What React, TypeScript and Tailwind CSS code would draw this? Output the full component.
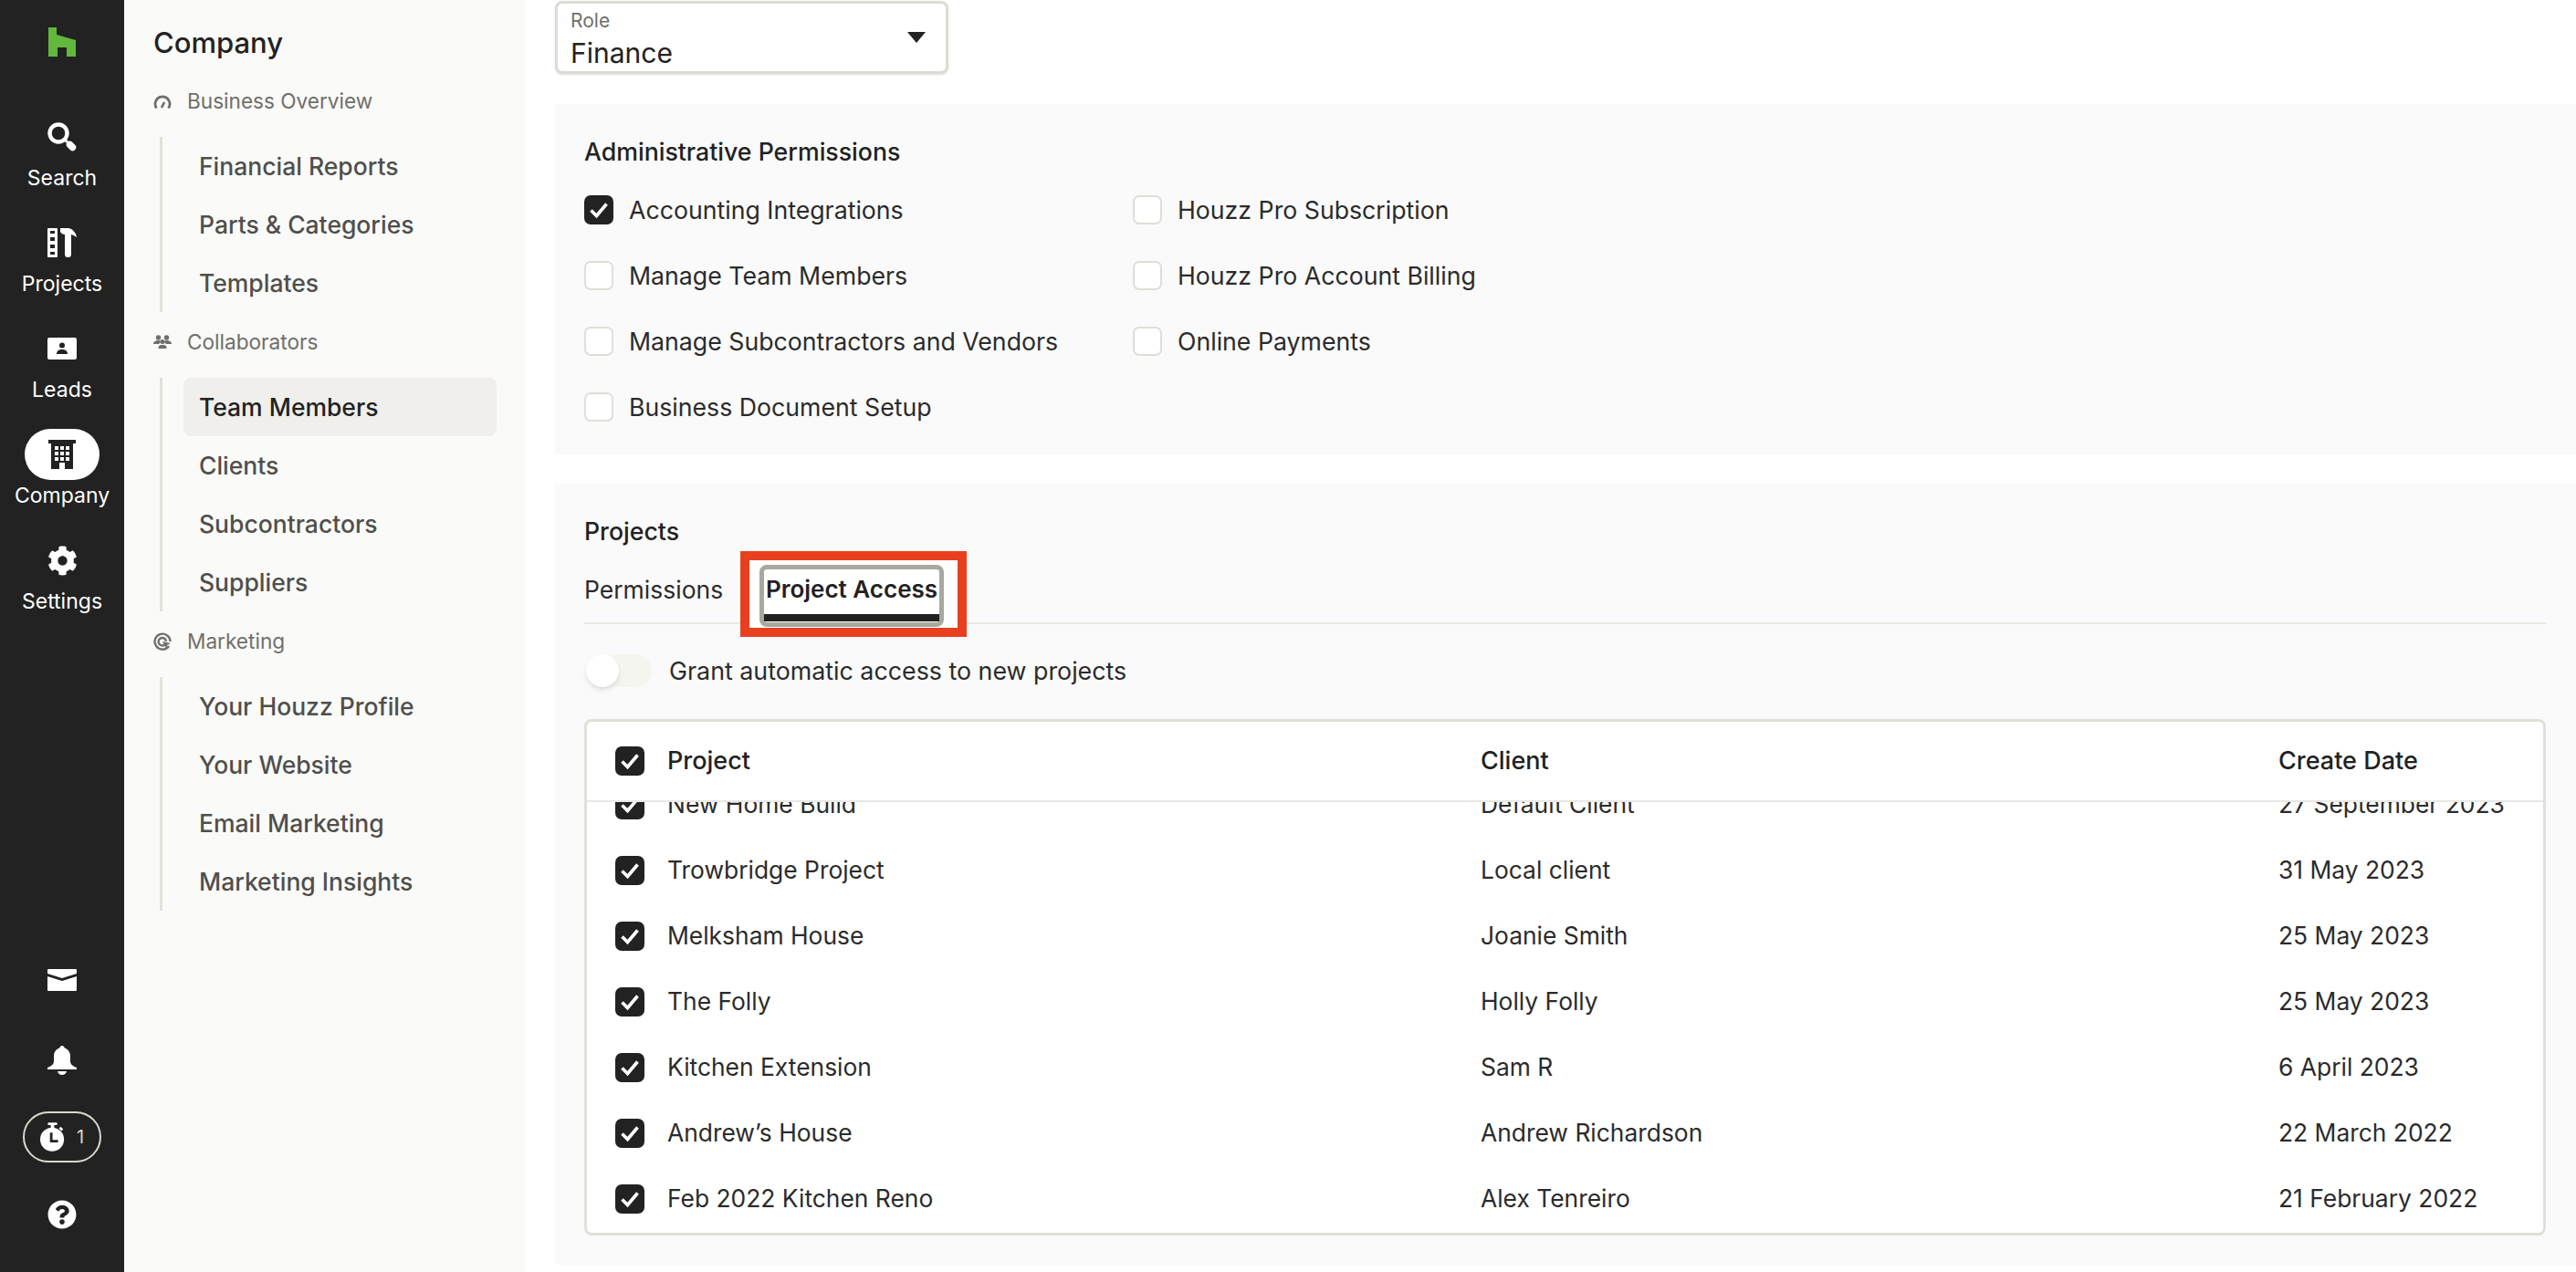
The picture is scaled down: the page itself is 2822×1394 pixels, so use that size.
import { FaCog, FaQuestionCircle } from "react-icons/fa";
import type { ReactNode } from "react";

const font = { fontFamily: "Inter, 'Noto Sans', sans-serif" };

function HouzzLogo() {
  return (
    <svg width="30" height="32" viewBox="0 0 30 32" fill="#62b83c">
      <path d="M0 0H9V8L30 14V32H20V22H10V32H0Z" />
    </svg>
  );
}

function SearchIcon() {
  return (
    <svg width="32" height="32" viewBox="0 0 32 32" fill="none" stroke="#fff">
      <circle cx="12" cy="12" r="9.5" strokeWidth="4.4" />
      <path d="M19 19L22 22" strokeWidth="3" />
      <path d="M24.5 24.5L27.5 27.5" strokeWidth="7.5" strokeLinecap="round" />
    </svg>
  );
}

function ProjectsIcon() {
  return (
    <svg width="32" height="32" viewBox="0 0 32 32" fill="#fff">
      <rect width="11" height="32" rx="1" />
      <path fill="#222" d="M3 3H8V6H3ZM3 10H8V14H3ZM3 18H8V22H3ZM3 26H8V29H3Z" />
      <path d="M14 0H23C28 1 31 5 32 10C29 8 27 7 26 7V28.5a3.5 3.5 0 0 1-7 0V7C17 7 15 6 14 4Z" />
    </svg>
  );
}

function LeadsIcon() {
  return (
    <svg width="32" height="24" viewBox="0 0 32 24" fill="#fff">
      <rect width="32" height="24" rx="2" />
      <circle cx="16" cy="8.5" r="3" fill="#222" />
      <path d="M10 18C10 14 13 13 16 13S22 14 22 18Z" fill="#222" />
    </svg>
  );
}

function BuildingIcon() {
  return (
    <svg width="30" height="32" viewBox="0 0 30 32" fill="#222">
      <path d="M0 0H30V4H27V32H18V25H12V32H3V4H0Z" />
      <path
        fill="#fff"
        d="M7 7H11V11H7ZM13 7H17V11H13ZM19 7H23V11H19ZM7 13H11V17H7ZM13 13H17V17H13ZM19 13H23V17H19ZM7 19H11V23H7ZM13 19H17V23H13ZM19 19H23V23H19Z"
      />
    </svg>
  );
}

function MailIcon() {
  return (
    <svg width="32" height="24" viewBox="0 0 32 24" fill="#fff">
      <path d="M1 0H31a1 1 0 0 1 1 1V5L16 10L0 5V1a1 1 0 0 1 1-1Z" />
      <path d="M0 8L16 13L32 8V23a1 1 0 0 1-1 1H1a1 1 0 0 1-1-1Z" />
    </svg>
  );
}

function BellIcon() {
  return (
    <svg width="32" height="32" viewBox="0 0 32 32" fill="#fff">
      <path d="M16 0C17.5 0 18.5 1 18.7 2.5C22.5 3.8 25 7 25 11V17C25 20 27 22 32 24V26H0V24C5 22 7 20 7 17V11C7 7 9.5 3.8 13.3 2.5C13.5 1 14.5 0 16 0Z" />
      <path d="M11 28H21C20.4 30.5 18.4 32 16 32S11.6 30.5 11 28Z" />
    </svg>
  );
}

function TimerIcon() {
  return (
    <svg width="28" height="32" viewBox="0 0 30 34" fill="#fff">
      <rect x="9" y="0" width="11" height="3" rx="1" />
      <rect x="12.5" y="2" width="4" height="5" />
      <path d="M24 5L27 8L25 10L22 7Z" />
      <circle cx="14" cy="20" r="14" />
      <path d="M13 12V22H21" fill="none" stroke="#222" strokeWidth="3" />
    </svg>
  );
}

function GaugeIcon() {
  return (
    <svg width="20" height="16" viewBox="0 0 20 16" fill="none" stroke="#6f6f6b" strokeWidth="2.8">
      <path d="M3.5 15.5A8 8 0 1 1 16.5 15.5" />
      <path d="M9 15L12 9" strokeWidth="2.6" />
    </svg>
  );
}

function PeopleIcon() {
  return (
    <svg width="20" height="16" viewBox="0 0 20 16" fill="#6f6f6b">
      <circle cx="5.5" cy="3" r="2.7" />
      <circle cx="14.5" cy="3" r="2.7" />
      <path d="M0 10C0 7 3 6 5.5 6S8 7 8 8L6 10Z" />
      <path d="M20 10C20 7 17 6 14.5 6S12 7 12 8L14 10Z" />
      <circle cx="10" cy="7.5" r="2.5" />
      <path d="M5.5 14C5.5 11.5 8 11 10 11S14.5 11.5 14.5 14V15H5.5Z" />
    </svg>
  );
}

function MarketingIcon() {
  return (
    <svg width="20" height="20" viewBox="0 0 20 20" fill="none" stroke="#6f6f6b" strokeWidth="2.4">
      <path d="M17 15A8.5 8.5 0 1 1 18.5 10" />
      <path d="M12.5 13.5A4.2 4.2 0 1 1 14 10" />
      <path d="M10 10L19 12L15 14L14 18Z" fill="#6f6f6b" stroke="none" />
    </svg>
  );
}

function RailItem({ icon, label, active }: { icon: ReactNode; label: string; active?: boolean }) {
  return (
    <div className="flex h-[116px] flex-col items-center">
      <div className={`flex h-[56px] w-[82px] items-center justify-center rounded-full ${active ? "bg-white" : ""}`}>
        {icon}
      </div>
      <span className="text-[23px] leading-[34px] text-white">{label}</span>
    </div>
  );
}

function Rail() {
  return (
    <div className="flex h-full w-[136px] shrink-0 flex-col items-center bg-[#222222]">
      <div className="flex h-[122px] w-full justify-center pt-[30px]">
        <HouzzLogo />
      </div>
      <RailItem icon={<SearchIcon />} label="Search" />
      <RailItem icon={<ProjectsIcon />} label="Projects" />
      <RailItem icon={<LeadsIcon />} label="Leads" />
      <RailItem icon={<BuildingIcon />} label="Company" active />
      <RailItem icon={<FaCog size={33} color="#fff" />} label="Settings" />
      <div className="mt-auto flex flex-col items-center pb-[47px]">
        <MailIcon />
        <div className="mt-[60px]">
          <BellIcon />
        </div>
        <div className="mt-[40px] flex h-[56px] w-[86px] items-center justify-center gap-[12px] rounded-full border-[2px] border-[#d8d8ce]">
          <TimerIcon />
          <span className="text-[20px] text-[#d8d8ce]">1</span>
        </div>
        <div className="mt-[41px]">
          <FaQuestionCircle size={32} color="#fff" />
        </div>
      </div>
    </div>
  );
}

function SideGroup({ icon, title, items, current }: { icon: ReactNode; title: string; items: string[]; current?: string }) {
  return (
    <div>
      <div className="flex h-[72px] items-start pt-[19px] text-[22.6px] leading-[28px] text-[#6f6f6b]">
        <span className="flex h-[28px] w-[37px] items-center">{icon}</span>
        {title}
      </div>
      <div className="ml-[7px] flex flex-col border-l-[3px] border-[#e2e2da] pl-[23px] pr-[32px]">
        {items.map((item) => (
          <div
            key={item}
            className={`flex h-[64px] items-center rounded-[8px] pl-[17px] pt-[2px] text-[26.5px] font-medium ${
              item === current ? "bg-[#f0efeb] text-[#222222]" : "text-[#4f4f4c]"
            }`}
          >
            {item}
          </div>
        ))}
      </div>
    </div>
  );
}

function Sidebar() {
  return (
    <div className="h-full w-[440px] shrink-0 bg-[#fafaf8] pl-[32px]">
      <div className="flex h-[78px] items-start pt-[27px] text-[31px] font-medium leading-[40px] text-[#222222]">Company</div>
      <SideGroup
        icon={<GaugeIcon />}
        title="Business Overview"
        items={["Financial Reports", "Parts & Categories", "Templates"]}
      />
      <SideGroup
        icon={<PeopleIcon />}
        title="Collaborators"
        items={["Team Members", "Clients", "Subcontractors", "Suppliers"]}
        current="Team Members"
      />
      <SideGroup
        icon={<MarketingIcon />}
        title="Marketing"
        items={["Your Houzz Profile", "Your Website", "Email Marketing", "Marketing Insights"]}
      />
    </div>
  );
}

function CheckBox({ checked }: { checked?: boolean }) {
  if (checked) {
    return (
      <span className="flex h-[32px] w-[32px] shrink-0 items-center justify-center rounded-[7px] bg-[#222222]">
        <svg width="32" height="32" viewBox="0 0 32 32" fill="none" stroke="#fff" strokeWidth="3.6">
          <path d="M7.5 16.5L13.5 22.5L24.5 9.5" />
        </svg>
      </span>
    );
  }
  return <span className="h-[32px] w-[32px] shrink-0 rounded-[7px] border-[2px] border-[#dfdfd8] bg-white" />;
}

function Permission({ label, checked }: { label: string; checked?: boolean }) {
  return (
    <div className="flex h-[72px] items-center gap-[17px] text-[26.7px] text-[#2b2b2b]">
      <CheckBox checked={checked} />
      {label}
    </div>
  );
}

const rows = [
  ["New Home Build", "Default Client", "27 September 2023"],
  ["Trowbridge Project", "Local client", "31 May 2023"],
  ["Melksham House", "Joanie Smith", "25 May 2023"],
  ["The Folly", "Holly Folly", "25 May 2023"],
  ["Kitchen Extension", "Sam R", "6 April 2023"],
  ["Andrew’s House", "Andrew Richardson", "22 March 2022"],
  ["Feb 2022 Kitchen Reno", "Alex Tenreiro", "21 February 2022"],
];

function ProjectTable() {
  return (
    <div className="overflow-hidden rounded-[8px] border-[3px] border-[#e0e0d8] bg-white">
      <div className="grid h-[88px] grid-cols-[979px_874px_1fr] items-center border-b-[2px] border-[#e8e8e4] text-[27px] font-medium text-[#222222]">
        <div className="flex items-center gap-[25px] pl-[31px]">
          <CheckBox checked />
          Project
        </div>
        <div>Client</div>
        <div>Create Date</div>
      </div>
      <div className="h-[472px] overflow-hidden">
        <div className="-mt-[33px]">
          {rows.map((row) => (
            <div key={row[0]} className="grid h-[72px] grid-cols-[979px_874px_1fr] items-center text-[26.4px] text-[#2b2b2b]">
              <div className="flex items-center gap-[25px] pl-[31px]">
                <CheckBox checked />
                {row[0]}
              </div>
              <div>{row[1]}</div>
              <div>{row[2]}</div>
            </div>
          ))}
        </div>
      </div>
    </div>
  );
}

function Tabs() {
  return (
    <div className="relative mt-[24px] flex h-[62px] items-start border-b-[2px] border-[#e8e8e4] text-[26.5px] leading-[36px] text-[#2b2b2b]">
      <span className="pt-[6px]">Permissions</span>
      <div className="absolute left-[171px] top-[-18px] h-[94px] w-[248px] border-[10px] border-[#e8401f] bg-white">
        <div className="ml-[11px] mt-[5px] h-[68px] w-[202px] rounded-[8px] border-[5px] border-[#a8a89f] bg-white">
          <div className="flex h-[49px] items-center justify-center whitespace-nowrap pb-[5px] text-[26px] font-semibold text-[#222222]">
            Project Access
          </div>
          <div className="h-[8px] bg-[#222222]" />
        </div>
      </div>
    </div>
  );
}

export default function App() {
  return (
    <div className="flex h-[1394px] w-full overflow-hidden bg-white" style={font}>
      <Rail />
      <Sidebar />
      <main className="min-w-0 flex-1 pl-[32px]">
        <div className="mt-[1px] flex h-[80px] w-[431px] items-start justify-between rounded-[8px] border-[3px] border-[#dcdcd4] bg-white pl-[14px] pr-[22px] shadow-sm">
          <div>
            <div className="mt-[6px] text-[21px] leading-[26px] text-[#6f6f6b]">Role</div>
            <div className="mt-[6px] text-[30px] leading-[32px] text-[#222222]">Finance</div>
          </div>
          <svg className="mt-[31px]" width="20" height="12" viewBox="0 0 20 12" fill="#222">
            <path d="M0 0H20L10 12Z" />
          </svg>
        </div>
        <section className="mt-[33px] h-[384px] bg-[#fafafa] pl-[32px] pt-[36px]">
          <h2 className="text-[26.7px] font-medium leading-[32px] text-[#222222]">Administrative Permissions</h2>
          <div className="mt-[12px] grid grid-cols-[601px_1fr]">
            <Permission label="Accounting Integrations" checked />
            <Permission label="Houzz Pro Subscription" />
            <Permission label="Manage Team Members" />
            <Permission label="Houzz Pro Account Billing" />
            <Permission label="Manage Subcontractors and Vendors" />
            <Permission label="Online Payments" />
            <Permission label="Business Document Setup" />
          </div>
        </section>
        <section className="mt-[32px] h-[856px] bg-[#fafafa] pl-[32px] pr-[33px] pt-[36px]">
          <h2 className="text-[26.7px] font-medium leading-[32px] text-[#222222]">Projects</h2>
          <Tabs />
          <div className="mt-[32px] flex h-[38px] items-center gap-[19px] text-[26.8px] text-[#2b2b2b]">
            <div className="ml-[2px] h-[36px] w-[72px] rounded-full bg-[#f5f5f0]">
              <div className="h-[36px] w-[36px] rounded-full bg-white shadow-md" />
            </div>
            Grant automatic access to new projects
          </div>
          <div className="mt-[34px]">
            <ProjectTable />
          </div>
        </section>
      </main>
    </div>
  );
}
